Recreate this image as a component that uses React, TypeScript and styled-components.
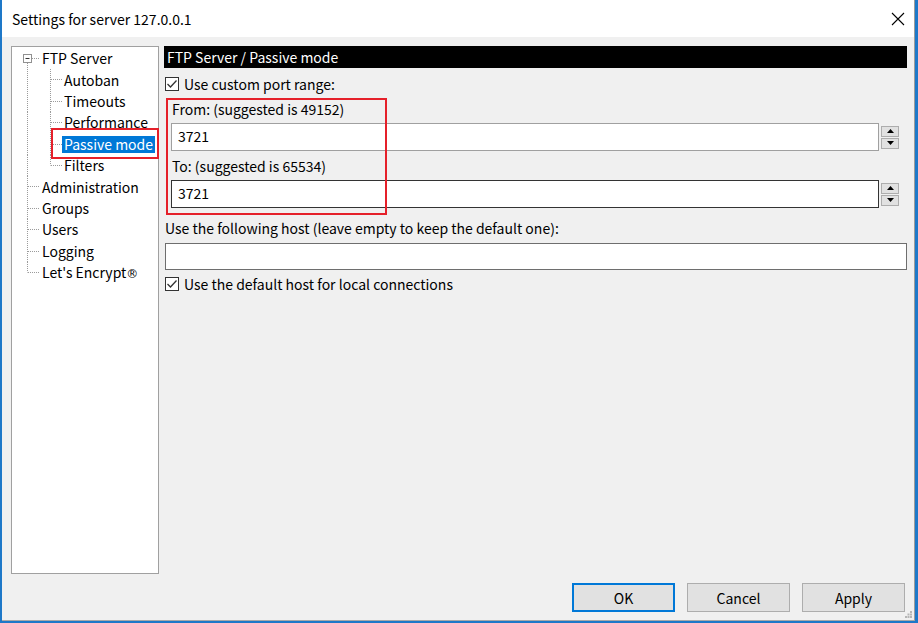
import React from "react";
import styled, { createGlobalStyle } from "styled-components";

const GlobalStyle = createGlobalStyle`
  html, body {
    margin: 0;
    padding: 0;
    background: #1e78c8;
  }
  body {
    font-family: "Noto Sans CJK KR", "Noto Sans", sans-serif;
    font-size: 14px;
    color: #000;
  }
  * { box-sizing: border-box; }
`;

const Window = styled.div`
  position: relative;
  margin-left: 2px;
  width: 913px;
  height: 621px;
  display: flex;
  flex-direction: column;
  background: #f0f0f0;
  border-right: 1px solid #9c9c9c;
  border-bottom: 1px solid #a8a8a8;
`;

const TitleBar = styled.div`
  height: 37px;
  flex: none;
  background: #fff;
  display: flex;
  align-items: center;
  justify-content: space-between;
  padding: 0 9px 0 10px;
`;

const Title = styled.span`
  font-size: 14px;
  color: #000;
`;

const Body = styled.div`
  flex: 1;
  display: flex;
  flex-direction: column;
  padding: 9px 7px 8px 9px;
  min-height: 0;
`;

const Main = styled.div`
  flex: 1;
  display: flex;
  gap: 5px;
  min-height: 0;
`;

const Tree = styled.div`
  width: 148px;
  flex: none;
  background: #fff;
  border: 1px solid #a0a0a0;
  padding-top: 1px;
`;

const Row = styled.div`
  position: relative;
  height: 21.4px;
  display: flex;
  align-items: center;
`;

const Label = styled.span<{ $selected?: boolean }>`
  height: 17px;
  line-height: 17px;
  padding: 0 2px;
  white-space: nowrap;
  background: ${(p) => (p.$selected ? "#0078d7" : "transparent")};
  color: ${(p) => (p.$selected ? "#fff" : "#000")};
`;

const Mark = styled.span`
  font-family: "DejaVu Sans", sans-serif;
  font-size: 12px;
`;

const Annotation = styled.div<{ $left: number; $top: number; $w: number; $h: number }>`
  position: absolute;
  left: ${(p) => p.$left}px;
  top: ${(p) => p.$top}px;
  width: ${(p) => p.$w}px;
  height: ${(p) => p.$h}px;
  border: 2px solid #e5202a;
  pointer-events: none;
`;

const Content = styled.div`
  flex: 1;
  display: flex;
  flex-direction: column;
  min-width: 0;
`;

const Header = styled.div`
  height: 22px;
  line-height: 22px;
  background: #000;
  color: #fff;
  padding-left: 3px;
`;

const CheckRow = styled.label<{ $mt: number }>`
  display: flex;
  align-items: center;
  gap: 5px;
  height: 19px;
  margin-top: ${(p) => p.$mt}px;
  padding-left: 1px;
`;

const Box = styled.span`
  width: 14px;
  height: 14px;
  border: 1px solid #333;
  background: #fff;
  display: flex;
  align-items: center;
  justify-content: center;
`;

const PortGroup = styled.div`
  position: relative;
  margin-top: 6px;
  padding: 0 8px 0 7px;
`;

const FieldLabel = styled.div<{ $mt?: number; $pl?: number }>`
  height: 20px;
  line-height: 20px;
  margin-top: ${(p) => p.$mt ?? 0}px;
  padding-left: ${(p) => p.$pl ?? 0}px;
`;

const SpinRow = styled.div`
  display: flex;
  align-items: center;
  gap: 2px;
  margin-top: 4px;
`;

const TextBox = styled.input<{ $border: string; $h: number }>`
  flex: 1;
  min-width: 0;
  width: 100%;
  height: ${(p) => p.$h}px;
  border: 1px solid ${(p) => p.$border};
  background: #fff;
  padding: 0 6px 2px;
  font: inherit;
  font-size: 14px;
  color: #000;
  outline: none;
`;

const Spin = styled.div`
  display: flex;
  flex-direction: column;
  gap: 1px;
  width: 18px;
`;

const SpinButton = styled.div`
  height: 11px;
  background: #e1e1e1;
  border: 1px solid #adadad;
  display: flex;
  align-items: center;
  justify-content: center;
`;

const HostBox = styled.div`
  margin-top: 5px;
  padding-left: 1px;
  display: flex;
`;

const Footer = styled.div`
  flex: none;
  display: flex;
  justify-content: flex-end;
  gap: 12px;
  margin-top: 9px;
  padding-right: 2px;
`;

const Button = styled.button<{ $default?: boolean }>`
  width: 103px;
  height: 29px;
  font: inherit;
  font-size: 14px;
  color: #000;
  background: #e1e1e1;
  border: ${(p) => (p.$default ? "2px solid #0078d7" : "1px solid #adadad")};
  padding: 0;
`;

const Grip = styled.svg`
  position: absolute;
  right: 2px;
  bottom: 2px;
`;

type Item = { label: string; level: 0 | 1; expander?: boolean; last?: boolean; selected?: boolean; mark?: boolean };

const items: Item[] = [
  { label: "FTP Server", level: 0, expander: true },
  { label: "Autoban", level: 1 },
  { label: "Timeouts", level: 1 },
  { label: "Performance", level: 1 },
  { label: "Passive mode", level: 1, selected: true },
  { label: "Filters", level: 1, last: true },
  { label: "Administration", level: 0 },
  { label: "Groups", level: 0 },
  { label: "Users", level: 0 },
  { label: "Logging", level: 0 },
  { label: "Let's Encrypt", level: 0, last: true, mark: true },
];

const H = 21.4;
const dot = { stroke: "#999", strokeWidth: 1, strokeDasharray: "1 1" };

const Connector = ({ item }: { item: Item }) => {
  const w = item.level === 0 ? 28 : 50;
  const mid = 10.5;
  return (
    <svg width={w} height={H} viewBox={`0 0 ${w} ${H}`} style={{ flex: "none" }}>
      {item.level === 0 && item.expander && (
        <>
          <line x1={15.5} y1={15} x2={15.5} y2={H} {...dot} />
          <line x1={20} y1={mid} x2={28} y2={mid} {...dot} />
          <rect x={11.5} y={6.5} width={8} height={8} fill="#fff" stroke="#919191" />
          <line x1={13.5} y1={mid} x2={17.5} y2={mid} stroke="#333" />
        </>
      )}
      {item.level === 0 && !item.expander && (
        <>
          <line x1={15.5} y1={0} x2={15.5} y2={item.last ? mid : H} {...dot} />
          <line x1={16} y1={mid} x2={28} y2={mid} {...dot} />
        </>
      )}
      {item.level === 1 && (
        <>
          <line x1={15.5} y1={0} x2={15.5} y2={H} {...dot} />
          <line x1={38.5} y1={0} x2={38.5} y2={item.last ? mid : H} {...dot} />
          <line x1={39} y1={mid} x2={50} y2={mid} {...dot} />
        </>
      )}
    </svg>
  );
};

const Check = () => (
  <Box>
    <svg width="12" height="12" viewBox="0 0 12 12">
      <path d="M1.5 6 L4.5 9 L10.5 2.5" fill="none" stroke="#333" strokeWidth="1.3" />
    </svg>
  </Box>
);

const Arrow = ({ up }: { up?: boolean }) => (
  <svg width="7" height="4" viewBox="0 0 7 4">
    <path d={up ? "M0 4 L3.5 0 L7 4 Z" : "M0 0 L3.5 4 L7 0 Z"} fill="#000" />
  </svg>
);

const PortField = ({ border }: { border: string }) => (
  <SpinRow>
    <TextBox $border={border} $h={28} defaultValue="3721" />
    <Spin>
      <SpinButton>
        <Arrow up />
      </SpinButton>
      <SpinButton>
        <Arrow />
      </SpinButton>
    </Spin>
  </SpinRow>
);

export default function App() {
  return (
    <>
      <GlobalStyle />
      <Window>
        <TitleBar>
          <Title>Settings for server 127.0.0.1</Title>
          <svg width="14" height="14" viewBox="0 0 14 14">
            <path d="M1 1 L13 13 M13 1 L1 13" stroke="#000" strokeWidth="1.1" />
          </svg>
        </TitleBar>
        <Body>
          <Main>
            <Tree>
              {items.map((it) => (
                <Row key={it.label}>
                  <Connector item={it} />
                  <Label $selected={it.selected}>
                    {it.label}
                    {it.mark && <Mark>®</Mark>}
                  </Label>
                  {it.selected && <Annotation $left={39} $top={-5.3} $w={108} $h={31} />}
                </Row>
              ))}
            </Tree>
            <Content>
              <Header>FTP Server / Passive mode</Header>
              <CheckRow $mt={6}>
                <Check />
                <span>Use custom port range:</span>
              </CheckRow>
              <PortGroup>
                <FieldLabel $pl={1}>From: (suggested is 49152)</FieldLabel>
                <PortField border="#a0a0a0" />
                <FieldLabel $mt={5} $pl={1}>To: (suggested is 65534)</FieldLabel>
                <PortField border="#333" />
                <Annotation $left={2} $top={-1} $w={221} $h={117} />
              </PortGroup>
              <FieldLabel $mt={10} $pl={1}>
                Use the following host (leave empty to keep the default one):
              </FieldLabel>
              <HostBox>
                <TextBox $border="#6e6e6e" $h={27} defaultValue="" />
              </HostBox>
              <CheckRow $mt={4}>
                <Check />
                <span>Use the default host for local connections</span>
              </CheckRow>
            </Content>
          </Main>
          <Footer>
            <Button $default>OK</Button>
            <Button>Cancel</Button>
            <Button>Apply</Button>
          </Footer>
        </Body>
        <Grip width="7" height="7" viewBox="0 0 7 7">
          <rect x="5" y="0" width="2" height="2" fill="#b5b5b5" />
          <rect x="2.5" y="2.5" width="2" height="2" fill="#b5b5b5" />
          <rect x="5" y="2.5" width="2" height="2" fill="#b5b5b5" />
          <rect x="0" y="5" width="2" height="2" fill="#b5b5b5" />
          <rect x="2.5" y="5" width="2" height="2" fill="#b5b5b5" />
          <rect x="5" y="5" width="2" height="2" fill="#b5b5b5" />
        </Grip>
      </Window>
    </>
  );
}
